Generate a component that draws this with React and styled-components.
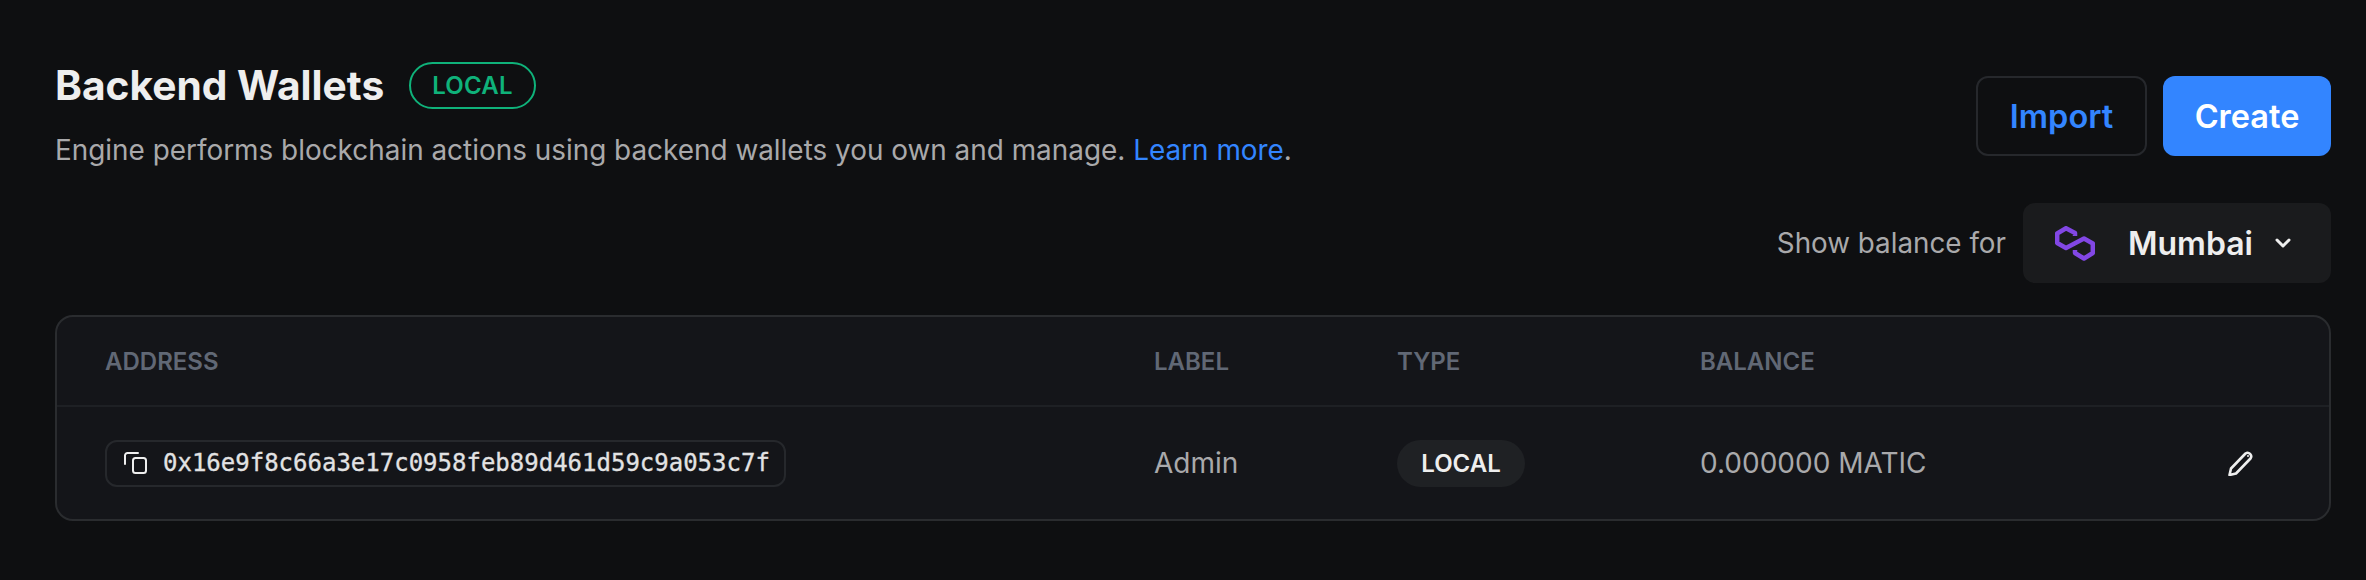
import React from 'react';
import styled, { createGlobalStyle } from 'styled-components';
import { ChevronDown } from 'lucide-react';

const GlobalStyle = createGlobalStyle`
  html, body {
    margin: 0;
    background: #0e0f11;
  }
  body {
    font-family: Inter, "Noto Sans", sans-serif;
    color: #eeeeee;
  }
`;

const Page = styled.div`
  height: 580px;
  box-sizing: border-box;
  padding: 62px 35px 0 55px;
  overflow: hidden;
`;

const Header = styled.div`
  display: flex;
  justify-content: space-between;
  align-items: flex-start;
`;

const TitleRow = styled.div`
  display: flex;
  align-items: center;
  gap: 25px;
`;

const Title = styled.h1`
  margin: 0;
  font-size: 40.7px;
  line-height: 47px;
  font-weight: 700;
  color: #eeeeee;
`;

const Badge = styled.span`
  box-sizing: border-box;
  height: 47px;
  padding: 0 21px;
  display: flex;
  align-items: center;
  border: 2px solid #0fb27a;
  border-radius: 24px;
  font-size: 24px;
  font-weight: 600;
  letter-spacing: 0.2px;
  color: #0fb27a;
`;

const Description = styled.p`
  margin: 23px 0 0;
  font-size: 27.9px;
  line-height: 36px;
  color: #a9a9ab;
  a {
    color: #3385ff;
    text-decoration: none;
  }
`;

const Actions = styled.div`
  display: flex;
  gap: 16px;
  margin-top: 14px;
`;

const Button = styled.button`
  box-sizing: border-box;
  height: 80px;
  width: ${(p) => (p.$primary ? '168px' : '171px')};
  border: ${(p) => (p.$primary ? 'none' : '2px solid #26282c')};
  border-radius: 12px;
  background: ${(p) => (p.$primary ? '#3385ff' : 'transparent')};
  color: ${(p) => (p.$primary ? '#ffffff' : '#3385ff')};
  font-family: inherit;
  font-size: 32.5px;
  font-weight: 600;
`;

const BalanceRow = styled.div`
  display: flex;
  justify-content: flex-end;
  align-items: center;
  gap: 17px;
  margin-top: 35px;
`;

const BalanceLabel = styled.span`
  font-size: 27.8px;
  color: #a9a9ab;
`;

const ChainSelect = styled.div`
  box-sizing: border-box;
  width: 308px;
  height: 80px;
  padding: 0 32px;
  display: flex;
  align-items: center;
  border-radius: 12px;
  background: #1a1b1d;
`;

const ChainName = styled.span`
  margin-left: 33px;
  font-size: 32px;
  font-weight: 600;
  color: #eeeeee;
`;

const Chevron = styled(ChevronDown)`
  margin-left: 18px;
  color: #eeeeee;
`;

const TableCard = styled.div`
  box-sizing: border-box;
  height: 206px;
  margin-top: 32px;
  border: 2px solid #2a2c2f;
  border-radius: 18px;
  background: #141519;
  overflow: hidden;
`;

const Table = styled.table`
  width: 100%;
  table-layout: fixed;
  border-collapse: collapse;
`;

const HeadCell = styled.th`
  width: ${(p) => p.$width || 'auto'};
  height: 89px;
  padding: 0 0 0 48px;
  box-sizing: border-box;
  text-align: left;
  border-bottom: 2px solid #1e2024;
  font-size: 24px;
  font-weight: 600;
  color: #616875;
`;

const Cell = styled.td`
  height: 113px;
  padding: 0 0 0 48px;
  box-sizing: border-box;
  font-size: 28px;
  color: #a9a9ab;
`;

const AddressPill = styled.div`
  box-sizing: border-box;
  display: inline-flex;
  align-items: center;
  gap: 16px;
  width: 681px;
  height: 47px;
  padding: 0 17px;
  border: 2px solid #26282c;
  border-radius: 12px;
  font-family: "DejaVu Sans Mono", "Liberation Mono", monospace;
  font-size: 24px;
  color: #e2e2e3;
  -webkit-text-stroke: 0.3px #e2e2e3;
  svg {
    flex: none;
  }
`;

const TypePill = styled.span`
  display: inline-flex;
  align-items: center;
  justify-content: center;
  width: 128px;
  height: 47px;
  border-radius: 24px;
  background: #1f2124;
  font-size: 24px;
  font-weight: 600;
  color: #eeeeee;
`;

const EditCell = styled(Cell)`
  padding: 0 0 0 76px;
  color: #eeeeee;
`;

const EditIcon = styled.svg`
  display: block;
`;

function PolygonIcon() {
  return (
    <svg width="40" height="35" viewBox="0 0 40 35" fill="none" stroke="#8247e5" strokeWidth="4.5" strokeLinejoin="round">
      <path d="M20 10V7L11 2.2L2.2 7.5V17L11 22L29 12.5L37.8 17.5V27L29 32.5L20 27V24" />
    </svg>
  );
}

function CopyIcon() {
  return (
    <svg width="23" height="22" viewBox="0 0 23 22" fill="none" stroke="#eeeeee" strokeWidth="2" strokeLinecap="round">
      <rect x="9" y="6" width="13" height="15" rx="2.5" />
      <path d="M1 12V3.5A2.5 2.5 0 0 1 3.5 1H14" />
    </svg>
  );
}

function PencilIcon() {
  return (
    <EditIcon width="26" height="26" viewBox="0 0 26 26" fill="none" stroke="currentColor" strokeWidth="2.6" strokeLinejoin="round">
      <path d="M3 18.5L17.5 3.5a3.6 3.6 0 0 1 5 5L8 23.5L1.5 25Z" />
      <circle cx="20" cy="6" r="1" fill="currentColor" stroke="none" />
    </EditIcon>
  );
}

export default function App() {
  return (
    <Page>
      <GlobalStyle />
      <Header>
        <div>
          <TitleRow>
            <Title>Backend Wallets</Title>
            <Badge>LOCAL</Badge>
          </TitleRow>
          <Description>
            Engine performs blockchain actions using backend wallets you own and manage. <a href="#learn">Learn more</a>.
          </Description>
        </div>
        <Actions>
          <Button>Import</Button>
          <Button $primary>Create</Button>
        </Actions>
      </Header>
      <BalanceRow>
        <BalanceLabel>Show balance for</BalanceLabel>
        <ChainSelect>
          <PolygonIcon />
          <ChainName>Mumbai</ChainName>
          <Chevron size={24} strokeWidth={3} />
        </ChainSelect>
      </BalanceRow>
      <TableCard>
        <Table>
          <thead>
            <tr>
              <HeadCell $width="1049px">ADDRESS</HeadCell>
              <HeadCell $width="243px">LABEL</HeadCell>
              <HeadCell $width="303px">TYPE</HeadCell>
              <HeadCell $width="500px">BALANCE</HeadCell>
              <HeadCell />
            </tr>
          </thead>
          <tbody>
            <tr>
              <Cell>
                <AddressPill>
                  <CopyIcon />
                  0x16e9f8c66a3e17c0958feb89d461d59c9a053c7f
                </AddressPill>
              </Cell>
              <Cell>Admin</Cell>
              <Cell>
                <TypePill>LOCAL</TypePill>
              </Cell>
              <Cell>0.000000 MATIC</Cell>
              <EditCell>
                <PencilIcon />
              </EditCell>
            </tr>
          </tbody>
        </Table>
      </TableCard>
    </Page>
  );
}
